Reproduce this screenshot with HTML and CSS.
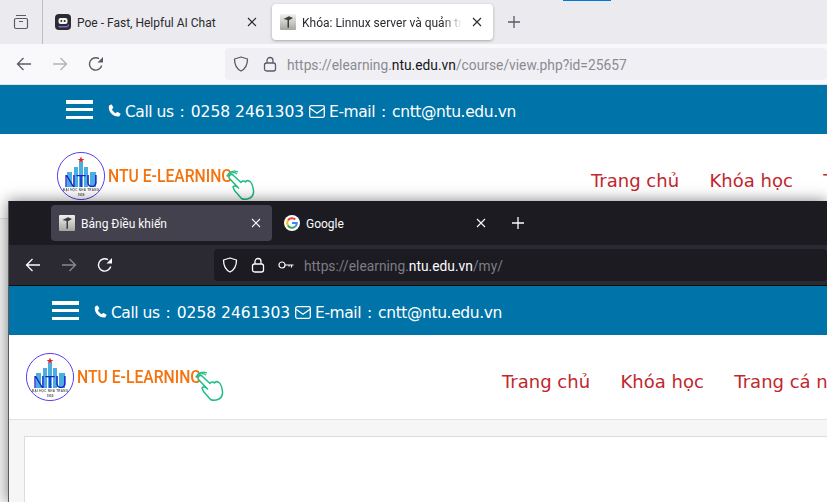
FILE: index.html
```html
<!DOCTYPE html>
<html lang="vi">
<head>
<meta charset="utf-8">
<title>NTU E-Learning</title>
<link rel="stylesheet" href="styles.css">
</head>
<body>
<svg class="defs" width="0" height="0" aria-hidden="true">
  <symbol id="i-back" viewBox="0 0 16 16"><path d="M15 8H1.500M7.500 2 1.500 8l6 6" fill="none" stroke="currentColor" stroke-width="1.300"/></symbol>
  <symbol id="i-fwd" viewBox="0 0 16 16"><path d="M1 8h13.500M8.500 2l6 6-6 6" fill="none" stroke="currentColor" stroke-width="1.300"/></symbol>
  <symbol id="i-reload" viewBox="0 0 16 16"><path d="M13.700 9.500A6.200 6.200 0 1 1 11 2.700" fill="none" stroke="currentColor" stroke-width="1.400"/><path d="M15 1v5.500H9.500z" fill="currentColor"/></symbol>
  <symbol id="i-shield" viewBox="0 0 16 16"><path d="M8 1 1.500 3c0 6 1.500 9.500 6.500 12 5-2.500 6.500-6 6.500-12z" fill="none" stroke="currentColor" stroke-width="1.300" stroke-linejoin="round"/></symbol>
  <symbol id="i-lock" viewBox="0 0 16 16"><rect x="2.500" y="7" width="11" height="8" rx="2" fill="none" stroke="currentColor" stroke-width="1.300"/><path d="M5 7V4.500a3 3 0 0 1 6 0V7" fill="none" stroke="currentColor" stroke-width="1.300"/></symbol>
  <symbol id="i-key" viewBox="0 0 16 16"><circle cx="4" cy="8" r="3" fill="none" stroke="currentColor" stroke-width="1.200"/><path d="M7 8h8.500M13.500 8v2.500M11 8v1.500" fill="none" stroke="currentColor" stroke-width="1.200"/></symbol>
  <symbol id="i-close" viewBox="0 0 10 10"><path d="M1 1l8 8M9 1l-8 8" fill="none" stroke="currentColor" stroke-width="1.100"/></symbol>
  <symbol id="i-plus" viewBox="0 0 14 14"><path d="M7 1v12M1 7h12" fill="none" stroke="currentColor" stroke-width="1.300"/></symbol>
  <symbol id="i-phone" viewBox="0 0 14 14"><path d="M3.200.6 1 1.800C.4 5 1.500 8 3.600 10.200c2.100 2.200 5.100 3.600 8.400 3.200l1.500-2.300a.8.8 0 0 0-.3-1L10.400 8.600a.8.8 0 0 0-1 .2L8.300 10C6.600 9 5 7.300 4.200 5.600l1.200-1.100a.8.8 0 0 0 .2-1L4.300 1a.8.8 0 0 0-1.100-.4z" fill="currentColor"/></symbol>
  <symbol id="i-mail" viewBox="0 0 16 13"><rect x=".7" y=".7" width="14.600" height="11.600" rx="1.500" fill="none" stroke="currentColor" stroke-width="1.300"/><path d="M1 3.200 8 8.200l7-5" fill="none" stroke="currentColor" stroke-width="1.300"/></symbol>
  <symbol id="i-moodle" viewBox="0 0 16 16"><defs><linearGradient id="mg" x1="0" y1="0" x2="0" y2="1"><stop offset="0" stop-color="#f0f0ee"/><stop offset="1" stop-color="#a5a5a0"/></linearGradient></defs><rect width="16" height="16" rx="1" fill="url(#mg)"/><path d="M3.500 5 9 2.300l4 1.700-4 2.200v7.500H7.500V6z" fill="#3d3d3d"/></symbol>
  <symbol id="i-hand" viewBox="0 0 198 50">
    <path d="M172 27c-.5-3 3-4.500 4.500-2.500l7.500 7c1-2 3.500-2 4.500-.500 1-1.500 3-1.500 4.500-.5 2 1.500 3 5 3.500 9 .3 3-1 6-3.500 7.500-3 1.500-6.500 1.500-8.500.5l-7-8-1.500-3.500c.5-1 2-1.500 3.500-.500l2 1.500z" fill="#fff" stroke="#1dbd87" stroke-width="1.500" stroke-linejoin="round"/>
    <path d="M172 24a5.500 5.500 0 0 1 8-1M170 25a8 8 0 0 1 11-4" fill="none" stroke="#1dbd87" stroke-width="1.200"/>
  </symbol>
  <symbol id="i-seal" viewBox="0 0 198 50">
    <circle cx="24" cy="25" r="23.600" fill="#fff" stroke="#5a3ff0" stroke-width="1"/>
    <path d="m24 5.500 1 2.400h2.400l-2 1.500.8 2.400-2.200-1.400-2.200 1.400.8-2.400-2-1.500H23z" fill="#d9252a"/>
    <path d="M10 21h5v15h-5zM17 16h4v20h-4zM22 11h4v25h-4zM27 16h4v20h-4zM33 21h6v15h-6z" fill="#4aaee0"/>
  </symbol>
</svg>

<section class="win win-back">
  <div class="tabs tabs-light">
    <span class="view-btn">
      <svg class="ic16" viewBox="0 0 16 16"><path d="M3 1.500h10M1.500 6a1.500 1.500 0 0 1 1.500-1.500h10a1.500 1.500 0 0 1 1.500 1.500v7a1.500 1.500 0 0 1-1.500 1.500H3A1.500 1.500 0 0 1 1.500 13zM6 7.500h4" fill="none" stroke="currentColor" stroke-width="1.200"/></svg>
    </span>
    <div class="tab tab-first">
      <svg class="ic16" viewBox="0 0 16 16"><rect width="16" height="16" rx="4" fill="#2c2c30"/><rect x="3.500" y="4" width="9" height="6" rx="2" fill="#f4f4f4"/><circle cx="6.300" cy="7" r="1" fill="#2c2c30"/><circle cx="9.700" cy="7" r="1" fill="#2c2c30"/><path d="M3 12h9l2-2v2l-2 1.500H4z" fill="#8a5fd0"/></svg>
      <span class="tab-title">Poe - Fast, Helpful AI Chat</span>
      <svg class="tab-x"><use href="#i-close"/></svg>
    </div>
    <div class="tab tab-active-light">
      <svg class="ic16"><use href="#i-moodle"/></svg>
      <span class="tab-title tab-fade">Khóa: Linnux server và quản trị mạng</span>
      <svg class="tab-x"><use href="#i-close"/></svg>
    </div>
    <svg class="new-tab"><use href="#i-plus"/></svg>
    <span class="audio-mark"></span>
  </div>
  <div class="toolbar toolbar-light">
    <svg class="nav-ic"><use href="#i-back"/></svg>
    <svg class="nav-ic dim"><use href="#i-fwd"/></svg>
    <svg class="nav-ic"><use href="#i-reload"/></svg>
    <div class="urlbar urlbar-light">
      <svg class="ic16 shield"><use href="#i-shield"/></svg>
      <svg class="ic16 lock"><use href="#i-lock"/></svg>
      <span class="url">https://elearning.<b>ntu.edu.vn</b>/course/view.php?id=25657</span>
    </div>
  </div>
  <div class="topbar">
    <span class="burger"><i></i><i></i><i></i></span>
    <svg class="phone"><use href="#i-phone"/></svg>
    <span class="contact"><span class="lbl">Call us</span><span class="sep"> : </span>0258 2461303</span>
    <svg class="mail"><use href="#i-mail"/></svg>
    <span class="contact"><span class="lbl">E-mail</span><span class="sep"> : </span><span class="addr">cntt@ntu.edu.vn</span></span>
  </div>
  <div class="site-head">
    <svg class="logo" viewBox="0 0 198 50">
      <use href="#i-seal"/>
      <text class="logo-ntu" x="24" y="36" text-anchor="middle">NTU</text>
      <text class="logo-sub" x="24" y="39.800" text-anchor="middle" textLength="36">ĐẠI HỌC NHA TRANG</text>
      <text class="logo-sub" x="24" y="44.500" text-anchor="middle">1959</text>
      <text class="logo-name" x="51" y="31" textLength="124" lengthAdjust="spacingAndGlyphs">NTU E-LEARNING</text>
      <use href="#i-hand"/>
    </svg>
    <nav class="menu"><a>Trang chủ</a><a>Khóa học</a><a>Trang cá nhân</a></nav>
  </div>
  <div class="page"></div>
</section>

<section class="win win-front">
  <div class="tabs tabs-dark">
    <div class="tab tab-active-dark">
      <svg class="ic16"><use href="#i-moodle"/></svg>
      <span class="tab-title">Bảng Điều khiển</span>
      <svg class="tab-x"><use href="#i-close"/></svg>
    </div>
    <div class="tab tab-dark">
      <svg class="ic16" viewBox="0 0 16 16"><circle cx="8" cy="8" r="8" fill="#fff"/><path d="M3.900 5.500A4.800 4.800 0 0 1 11.300 4.500" fill="none" stroke="#ea4335" stroke-width="2"/><path d="M3.900 10.500a4.800 4.800 0 0 1 0-5" fill="none" stroke="#fbbc05" stroke-width="2"/><path d="M11.400 11.400A4.800 4.800 0 0 1 3.900 10.500" fill="none" stroke="#34a853" stroke-width="2"/><path d="M8 8h4.800a4.800 4.800 0 0 1-1.400 3.400" fill="none" stroke="#4285f4" stroke-width="2"/></svg>
      <span class="tab-title">Google</span>
      <svg class="tab-x"><use href="#i-close"/></svg>
    </div>
    <svg class="new-tab"><use href="#i-plus"/></svg>
  </div>
  <div class="toolbar toolbar-dark">
    <svg class="nav-ic"><use href="#i-back"/></svg>
    <svg class="nav-ic dim"><use href="#i-fwd"/></svg>
    <svg class="nav-ic"><use href="#i-reload"/></svg>
    <div class="urlbar urlbar-dark">
      <svg class="ic16 shield"><use href="#i-shield"/></svg>
      <svg class="ic16 lock"><use href="#i-lock"/></svg>
      <svg class="ic16 key"><use href="#i-key"/></svg>
      <span class="url">https://elearning.<b>ntu.edu.vn</b>/my/</span>
    </div>
  </div>
  <div class="topbar">
    <span class="burger"><i></i><i></i><i></i></span>
    <svg class="phone"><use href="#i-phone"/></svg>
    <span class="contact"><span class="lbl">Call us</span><span class="sep"> : </span>0258 2461303</span>
    <svg class="mail"><use href="#i-mail"/></svg>
    <span class="contact"><span class="lbl">E-mail</span><span class="sep"> : </span><span class="addr">cntt@ntu.edu.vn</span></span>
  </div>
  <div class="site-head">
    <svg class="logo" viewBox="0 0 198 50">
      <use href="#i-seal"/>
      <text class="logo-ntu" x="24" y="36" text-anchor="middle">NTU</text>
      <text class="logo-sub" x="24" y="39.800" text-anchor="middle" textLength="36">ĐẠI HỌC NHA TRANG</text>
      <text class="logo-sub" x="24" y="44.500" text-anchor="middle">1959</text>
      <text class="logo-name" x="51" y="31" textLength="124" lengthAdjust="spacingAndGlyphs">NTU E-LEARNING</text>
      <use href="#i-hand"/>
    </svg>
    <nav class="menu"><a>Trang chủ</a><a>Khóa học</a><a>Trang cá nhân</a></nav>
  </div>
  <div class="page"><div class="card"></div></div>
</section>
</body>
</html>
```

FILE: styles.css
```css
* { box-sizing: border-box; }
html, body { margin: 0; height: 100%; overflow: hidden; background: #fff; }
body { position: relative; font-family: "Roboto", sans-serif; }
.defs { position: absolute; }

/* windows on a desktop */
.win { position: absolute; display: flex; flex-direction: column; overflow: hidden; background: #fff; }
.win-back { left: 0; top: 0; width: 827px; height: 502px; }
.win-front { left: 8px; top: 201px; width: 819px; height: 301px; border-left: 1px solid #5a5a5a; box-shadow: 0 0 14px rgba(0,0,0,.5); }

/* tab strip */
.tabs { flex: none; height: 44px; display: flex; align-items: center; position: relative; font-size: 12px; }
.tabs-light { background: #ebebef; color: #2a2a30; }
.tabs-dark { background: #1c1b22; color: #fbfbfe; padding-left: 42px; }
.view-btn { width: 43px; height: 44px; display: flex; align-items: center; justify-content: center; border-right: 1px solid #bcbcc0; color: #5b5b66; padding-right: 1px; }
.tab { width: 221px; height: 36px; display: flex; align-items: center; padding: 0 11px 0 8px; gap: 6px; border-radius: 4px; flex: none; }
.tab-first { margin-left: 4px; margin-right: 4px; }
.tab-active-light { background: #fff; box-shadow: 0 1px 3px rgba(0,0,0,.3); }
.tab-active-dark { background: #42414d; }
.tab-dark { margin-left: 4px; }
.tab-title { flex: 1; min-width: 0; white-space: nowrap; overflow: hidden; padding-top: 1px; }
.tab-fade { -webkit-mask-image: linear-gradient(to right, #000 88%, transparent 100%); mask-image: linear-gradient(to right, #000 88%, transparent 100%); margin-right: 4px; }
.tab-x { width: 10px; height: 10px; flex: none; }
.new-tab { width: 14px; height: 14px; flex: none; margin-left: 14px; }
.tabs-light .new-tab { color: #5b5b66; }
.audio-mark { position: absolute; left: 563px; top: 0; width: 48px; height: 1px; background: #0078d4; }
.ic16 { width: 16px; height: 16px; flex: none; }

/* toolbar */
.toolbar { flex: none; height: 41px; display: flex; align-items: center; border-bottom: 1px solid; padding-left: 16px; }
.toolbar-light { background: #f9f9fb; border-color: #e0e0e4; color: #5b5b66; }
.toolbar-dark { background: #2b2a33; border-color: #0c0c0d; color: #fbfbfe; }
.nav-ic { width: 16px; height: 16px; flex: none; margin-right: 20px; }
.nav-ic.dim { opacity: .45; }
.urlbar { flex: 1; height: 32px; display: flex; align-items: center; border-radius: 4px; font-size: 13.800px; white-space: nowrap; overflow: hidden; padding-left: 8px; }
.urlbar b { font-weight: 400; }
.urlbar-light { background: #f0f0f4; margin-left: 101px; color: #5b5b66; }
.urlbar-dark { background: #1c1b22; margin-left: 81px; color: #fbfbfe; }
.url { padding-top: 1px; }
.urlbar-light .url { color: #8a8a92; margin-left: 9px; }
.urlbar-light b { color: #15141a; }
.urlbar-dark .url { color: #7d7d85; margin-left: 10px; }
.urlbar-dark b { color: #fbfbfe; }
.urlbar-light .shield { margin-right: 13px; }
.urlbar-dark .shield { margin-right: 12px; }
.key { margin-left: 12px; }

/* site top bar */
.topbar { flex: none; height: 49px; background: #0073a8; color: #fff; display: flex; align-items: center; font-family: "DejaVu Sans", sans-serif; font-size: 15.500px; }
.win-back .topbar { padding-left: 66px; }
.win-front .topbar { padding-left: 43px; }
.burger { width: 27px; height: 19px; display: flex; flex-direction: column; justify-content: space-between; margin-right: 15px; }
.burger i { display: block; height: 3.500px; background: #fff; }
.phone { width: 13px; height: 13px; margin: 2px 4px 0 0; flex: none; }
.mail { width: 16px; height: 13px; margin: 3px 4px 0 5px; flex: none; }
.contact { white-space: nowrap; margin-top: 4px; }
.lbl { letter-spacing: -.45px; }
.sep { word-spacing: 1px; white-space: pre; }
.addr { letter-spacing: -.4px; }

/* site header */
.site-head { flex: none; height: 85px; background: #fff; border-bottom: 1px solid #e2e2e2; display: flex; align-items: center; white-space: nowrap; }
.win-back .site-head { padding-left: 57px; }
.win-front .site-head { padding-left: 17px; }
.logo { width: 198px; height: 50px; flex: none; filter: blur(.35px); }
.menu { display: flex; gap: 30.500px; margin-top: 8px; font-family: "DejaVu Sans", sans-serif; font-size: 18px; color: #c1272d; }
.win-back .menu { margin-left: 336px; }
.win-front .menu { margin-left: 278px; }
.logo-ntu { font: 400 16.500px "Liberation Sans", sans-serif; fill: #1d22c8; }
.logo-sub { font: 700 3px "Liberation Sans", sans-serif; fill: #555; }
.logo-name { font: 500 19px "Roboto", sans-serif; fill: #f5730f; }

/* page body */
.page { flex: 1; background: #f6f6f6; padding: 16px 0 0 15px; }
.card { height: 100%; background: #fff; border: 1px solid #dcdcdc; border-right: 0; border-bottom: 0; }
```
